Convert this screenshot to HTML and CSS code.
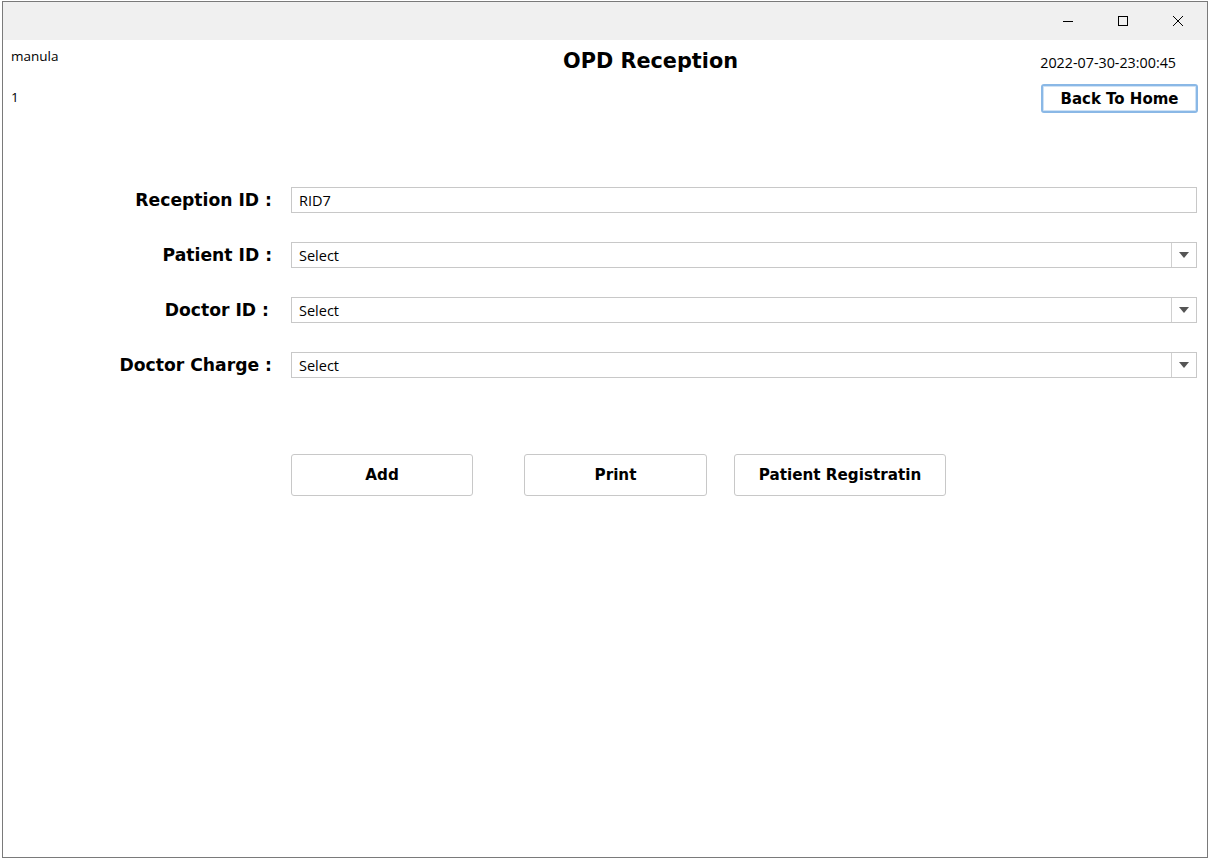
FILE: index.html
```html
<!DOCTYPE html>
<html>
<head>
<meta charset="utf-8">
<link rel="stylesheet" href="styles.css">
</head>
<body>
<div class="window">
  <div class="titlebar">
    <div class="ctrl"><svg width="12" height="12" viewBox="0 0 12 12"><path d="M1 6.5h10" stroke="#000" stroke-width="1"/></svg></div>
    <div class="ctrl"><svg width="12" height="12" viewBox="0 0 12 12"><rect x="1.5" y="1.5" width="9" height="9" fill="none" stroke="#000" stroke-width="1"/></svg></div>
    <div class="ctrl"><svg width="12" height="12" viewBox="0 0 12 12"><path d="M1 1L11 11M11 1L1 11" stroke="#000" stroke-width="1"/></svg></div>
  </div>
  <div class="content">
    <div class="header">
      <div class="user">
        <div class="small uname">manula</div>
        <div class="small uid">1</div>
      </div>
      <h1 class="title">OPD Reception</h1>
      <div class="right">
        <div class="small date">2022-07-30-23:00:45</div>
        <button class="home">Back To Home</button>
      </div>
    </div>
    <div class="form">
      <label class="lbl">Reception ID :</label>
      <div class="field">RID7</div>
      <label class="lbl">Patient ID :</label>
      <div class="field combo"><span>Select</span><span class="arrow"><svg width="10" height="6" viewBox="0 0 10 6"><path d="M0 0h10L5 6z" fill="#555"/></svg></span></div>
      <label class="lbl lbl-doc">Doctor ID :</label>
      <div class="field combo"><span>Select</span><span class="arrow"><svg width="10" height="6" viewBox="0 0 10 6"><path d="M0 0h10L5 6z" fill="#555"/></svg></span></div>
      <label class="lbl">Doctor Charge :</label>
      <div class="field combo"><span>Select</span><span class="arrow"><svg width="10" height="6" viewBox="0 0 10 6"><path d="M0 0h10L5 6z" fill="#555"/></svg></span></div>
    </div>
    <div class="actions">
      <button class="btn btn-add">Add</button>
      <button class="btn btn-print">Print</button>
      <button class="btn btn-reg">Patient Registratin</button>
    </div>
  </div>
</div>
</body>
</html>
```
FILE: styles.css
```css
html, body {
  margin: 0;
  padding: 0;
  background: #ffffff;
}
body {
  width: 1210px;
  height: 859px;
  overflow: hidden;
}
.window {
  margin: 1px 2px 0 2px;
  height: 855px;
  border: 1px solid #7a7a7a;
  background: #fff;
  display: flex;
  flex-direction: column;
}
.titlebar {
  height: 38px;
  background: #f0f0f0;
  display: flex;
  justify-content: flex-end;
  align-items: center;
  padding-right: 2px;
}
.ctrl {
  width: 55px;
  height: 38px;
  display: flex;
  align-items: center;
  justify-content: center;
}
.content {
  flex: 1;
}
.small {
  font-family: "Open Sans", "Noto Sans", sans-serif;
  font-size: 13.5px;
  color: #000;
}
.header {
  display: grid;
  grid-template-columns: 560px auto 1fr;
  height: 76px;
}
.user {
  padding: 6px 0 0 8px;
}
.uname {
  line-height: 20px;
}
.uid {
  line-height: 20px;
  margin-top: 21px;
}
.title {
  margin: 9px 0 0 0;
  font-family: "DejaVu Sans", Verdana, sans-serif;
  font-weight: bold;
  font-size: 20.8px;
  line-height: 24px;
}
.right {
  display: flex;
  flex-direction: column;
  align-items: flex-end;
  padding-right: 9px;
}
.date {
  margin-top: 13px;
  line-height: 20px;
  margin-right: 22px;
  font-size: 14.3px;
}
.home {
  margin-top: 11px;
  width: 157px;
  height: 29px;
  border: 2px solid #8ab8e6;
  box-shadow: inset 0 0 0 1px #cfe2f5;
  border-radius: 3px;
  background: #fff;
  font-family: "DejaVu Sans", Verdana, sans-serif;
  font-weight: bold;
  font-size: 15px;
  padding: 0;
  color: #000;
}
.form {
  display: grid;
  grid-template-columns: 269px 906px;
  column-gap: 19px;
  row-gap: 29px;
  margin-top: 71px;
}
.lbl {
  font-family: "DejaVu Sans", Verdana, sans-serif;
  font-weight: bold;
  font-size: 17.2px;
  text-align: right;
  display: flex;
  align-items: center;
  justify-content: flex-end;
  height: 26px;
}
.lbl-doc {
  padding-right: 3px;
}
.field {
  height: 26px;
  box-sizing: border-box;
  border: 1px solid #c8c8c8;
  display: flex;
  align-items: center;
  padding-left: 7px;
  font-family: "Open Sans", "Noto Sans", sans-serif;
  font-size: 14.5px;
  color: #000;
}
.combo {
  justify-content: space-between;
}
.arrow {
  width: 24px;
  height: 24px;
  border-left: 1px solid #d0d0d0;
  display: flex;
  align-items: center;
  justify-content: center;
}
.actions {
  display: flex;
  margin-top: 76px;
  padding-left: 288px;
}
.btn {
  height: 42px;
  border: 1px solid #c8c8c8;
  border-radius: 3px;
  background: #fff;
  font-family: "DejaVu Sans", Verdana, sans-serif;
  font-weight: bold;
  font-size: 15.2px;
  color: #000;
  padding: 0 0 1px 0;
}
.btn-add {
  width: 182px;
}
.btn-print {
  width: 183px;
  margin-left: 51px;
}
.btn-reg {
  width: 212px;
  margin-left: 27px;
}
```
